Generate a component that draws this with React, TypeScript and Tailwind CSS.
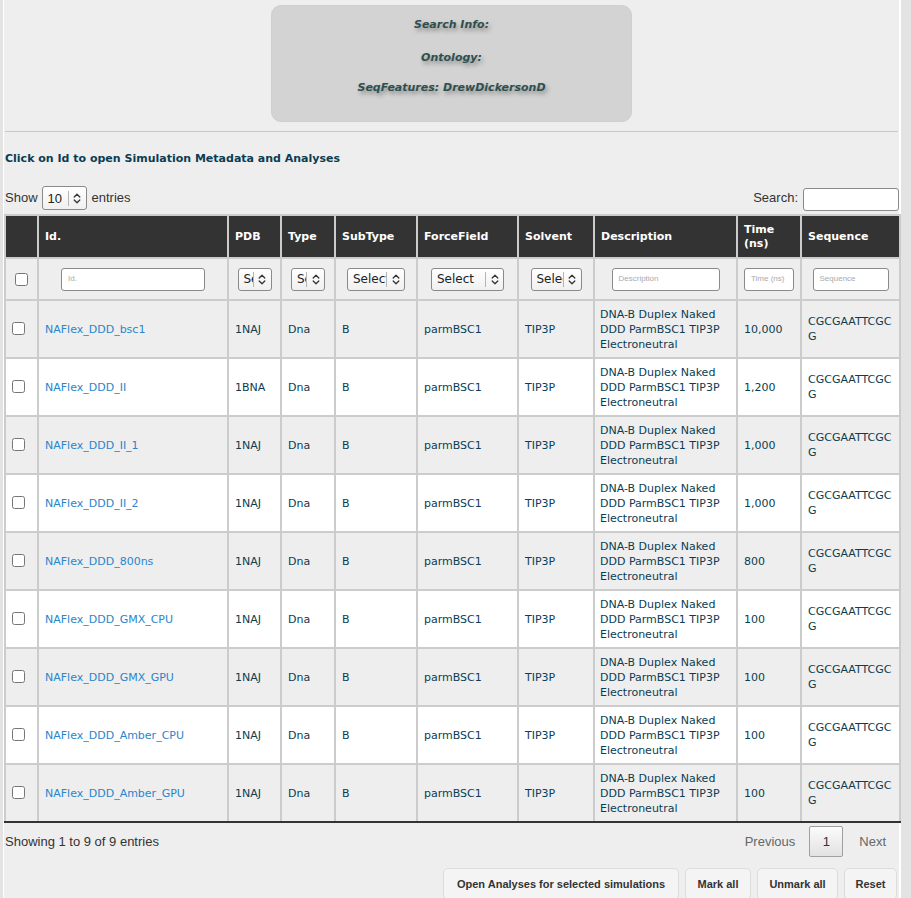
import React from "react";

const rows = [
  { id: "NAFlex_DDD_bsc1", pdb: "1NAJ", time: "10,000" },
  { id: "NAFlex_DDD_II", pdb: "1BNA", time: "1,200" },
  { id: "NAFlex_DDD_II_1", pdb: "1NAJ", time: "1,000" },
  { id: "NAFlex_DDD_II_2", pdb: "1NAJ", time: "1,000" },
  { id: "NAFlex_DDD_800ns", pdb: "1NAJ", time: "800" },
  { id: "NAFlex_DDD_GMX_CPU", pdb: "1NAJ", time: "100" },
  { id: "NAFlex_DDD_GMX_GPU", pdb: "1NAJ", time: "100" },
  { id: "NAFlex_DDD_Amber_CPU", pdb: "1NAJ", time: "100" },
  { id: "NAFlex_DDD_Amber_GPU", pdb: "1NAJ", time: "100" },
];

const Chevrons = () => (
  <svg width="8" height="11" viewBox="0 0 8 11" fill="none" stroke="#333" strokeWidth="1.3" strokeLinecap="round" strokeLinejoin="round">
    <path d="M1.2 4 L4 1.3 L6.8 4" />
    <path d="M1.2 7 L4 9.7 L6.8 7" />
  </svg>
);

const FakeSelect = ({ w, textW, label = "Select" }: { w: string; textW: string; label?: string }) => (
  <div className={`inline-flex items-center h-[23px] ${w} border border-[#8a8a8a] rounded-[3px] bg-gradient-to-b from-white to-[#f0f0f0] align-middle`}>
    <span className={`${textW} overflow-hidden whitespace-nowrap pl-[5px] text-left text-[12px] text-[#222] leading-none`} style={{ fontFamily: '"DejaVu Sans", sans-serif' }}>
      {label}
    </span>
    <span className="h-[15px] w-px bg-[#b5b5b5]" />
    <span className="flex-1 flex justify-center">
      <Chevrons />
    </span>
  </div>
);

const FakeInput = ({ w, ph }: { w: string; ph: string }) => (
  <div className={`inline-flex items-center h-[23px] ${w} border border-[#8a8a8a] rounded-[3px] bg-white pl-[6px] align-middle`}>
    <span className="text-[8px] text-[#aaa] leading-none" style={{ fontFamily: '"Liberation Sans", sans-serif' }}>
      {ph}
    </span>
  </div>
);

const cellBase = "border-2 border-[#cccccc] px-[6px] align-middle";

export default function App() {
  return (
    <div className="min-h-screen bg-[#e3e3e3] pl-[3px]" style={{ fontFamily: '"DejaVu Sans", sans-serif' }}>
      <div className="w-[898px] min-h-[898px] bg-[#eeeeee] border-l border-r-2 border-white">
        <div className="flex justify-center pt-[5px]">
          <div
            className="w-[361px] h-[117px] rounded-[10px] bg-[#d3d3d3] border border-[#cfcfcf] text-center text-[11px] font-bold italic text-[#2f4f4f] leading-[13px] pt-[12px]"
            style={{ textShadow: "2px 3px 4px rgba(0,0,0,0.35)" }}
          >
            <div>Search Info:</div>
            <div className="mt-[20px]">Ontology:</div>
            <div className="mt-[17px]">SeqFeatures: DrewDickersonD</div>
          </div>
        </div>
        <div className="mt-[9px] h-px bg-[#c8c8c8] mx-[1px]" />
        <div className="mt-[20px] pl-[1px] text-[11px] font-bold text-[#0b3d52] leading-[13px]">
          Click on Id to open Simulation Metadata and Analyses
        </div>
        <div className="mt-[21px] flex items-center justify-between h-[24px] pl-[1px] text-[13px] text-[#333]" style={{ fontFamily: '"Liberation Sans", sans-serif' }}>
          <div className="flex items-center">
            <span>Show</span>
            <div className="ml-[4px] inline-flex items-center h-[24px] w-[45px] border border-[#8a8a8a] rounded-[3px] bg-gradient-to-b from-white to-[#f0f0f0]">
              <span className="w-[25px] pl-[5px] text-[13px] text-[#222] leading-none">10</span>
              <span className="h-[15px] w-px bg-[#b5b5b5]" />
              <span className="flex-1 flex justify-center">
                <Chevrons />
              </span>
            </div>
            <span className="ml-[5px]">entries</span>
          </div>
          <div className="flex items-center">
            <span>Search:</span>
            <div className="ml-[5px] mt-[3px] h-[23px] w-[96px] border border-[#8a8a8a] rounded-[3px] bg-white" />
          </div>
        </div>
        <table className="mt-[4px] w-[895px] table-fixed border-collapse text-[11px] leading-[15px] text-[#0b3d52]">
          <colgroup>
            <col style={{ width: 33 }} />
            <col style={{ width: 190 }} />
            <col style={{ width: 53 }} />
            <col style={{ width: 54 }} />
            <col style={{ width: 82 }} />
            <col style={{ width: 101 }} />
            <col style={{ width: 76 }} />
            <col style={{ width: 143 }} />
            <col style={{ width: 64 }} />
            <col style={{ width: 99 }} />
          </colgroup>
          <thead>
            <tr className="h-[43px] bg-[#333333] text-white font-bold text-left">
              <th className={cellBase}></th>
              <th className={cellBase}>Id.</th>
              <th className={cellBase}>PDB</th>
              <th className={cellBase}>Type</th>
              <th className={cellBase}>SubType</th>
              <th className={cellBase}>ForceField</th>
              <th className={cellBase}>Solvent</th>
              <th className={cellBase}>Description</th>
              <th className={`${cellBase} leading-[14px]`}>
                Time
                <br />
                (ns)
              </th>
              <th className={cellBase}>Sequence</th>
            </tr>
          </thead>
          <tbody>
            <tr className="h-[42px] bg-[#eeeeee]">
              <td className={`${cellBase} text-center`}>
                <input type="checkbox" className="align-middle m-0" />
              </td>
              <td className={`${cellBase} text-center`}>
                <FakeInput w="w-[144px]" ph="Id." />
              </td>
              <td className={`${cellBase} text-center px-0`}>
                <FakeSelect w="w-[34px]" textW="w-[14px]" />
              </td>
              <td className={`${cellBase} text-center px-0`}>
                <FakeSelect w="w-[34px]" textW="w-[14px]" />
              </td>
              <td className={`${cellBase} text-center px-0`}>
                <FakeSelect w="w-[58px]" textW="w-[38px]" />
              </td>
              <td className={`${cellBase} text-center px-0`}>
                <FakeSelect w="w-[73px]" textW="w-[53px]" />
              </td>
              <td className={`${cellBase} text-center px-0`}>
                <FakeSelect w="w-[51px]" textW="w-[31px]" />
              </td>
              <td className={`${cellBase} text-center`}>
                <FakeInput w="w-[108px]" ph="Description" />
              </td>
              <td className={`${cellBase} text-center px-0`}>
                <FakeInput w="w-[50px]" ph="Time (ns)" />
              </td>
              <td className={`${cellBase} text-center`}>
                <FakeInput w="w-[76px]" ph="Sequence" />
              </td>
            </tr>
            {rows.map((r, i) => {
              const last = i === rows.length - 1 ? "border-b-[#333]" : "";
              return (
                <tr key={r.id} className={`h-[58px] ${i % 2 === 0 ? "bg-[#eeeeee]" : "bg-white"}`}>
                  <td className={`${cellBase} text-left ${last}`}>
                    <input type="checkbox" className="align-middle m-0 -mt-[3px]" />
                  </td>
                  <td className={`${cellBase} ${last}`}>
                    <span className="text-[#2a85cc]">{r.id}</span>
                  </td>
                  <td className={`${cellBase} ${last}`}>{r.pdb}</td>
                  <td className={`${cellBase} ${last}`}>Dna</td>
                  <td className={`${cellBase} ${last}`}>B</td>
                  <td className={`${cellBase} ${last}`}>parmBSC1</td>
                  <td className={`${cellBase} ${last}`}>TIP3P</td>
                  <td className={`${cellBase} pl-[5px] ${last}`}>DNA-B Duplex Naked DDD ParmBSC1 TIP3P Electroneutral</td>
                  <td className={`${cellBase} ${last}`}>{r.time}</td>
                  <td className={`${cellBase} break-all ${last}`}>CGCGAATTCGCG</td>
                </tr>
              );
            })}
          </tbody>
        </table>
        <div className="flex items-center justify-between pl-[1px] pr-[13px] mt-[3px] text-[13px]" style={{ fontFamily: '"Liberation Sans", sans-serif' }}>
          <span className="text-[#333]">Showing 1 to 9 of 9 entries</span>
          <div className="flex items-center text-[#666]">
            <span className="mr-[14px]">Previous</span>
            <span className="w-[34px] h-[31px] flex items-center justify-center border border-[#a0a0a0] rounded-[2px] bg-gradient-to-b from-[#fbfbfb] to-[#e2e2e2] text-[#333]">1</span>
            <span className="ml-[16px]">Next</span>
          </div>
        </div>
        <div className="flex justify-end gap-[6px] pr-[2px] mt-[11px] text-[11px] font-bold text-[#333]" style={{ fontFamily: '"Liberation Sans", sans-serif' }}>
          <div className="h-[32px] w-[236px] flex items-center justify-center border border-[#dcdcdc] rounded-[5px] bg-[#f4f4f4]">Open Analyses for selected simulations</div>
          <div className="h-[32px] w-[66px] flex items-center justify-center border border-[#dcdcdc] rounded-[5px] bg-[#f4f4f4]">Mark all</div>
          <div className="h-[32px] w-[81px] flex items-center justify-center border border-[#dcdcdc] rounded-[5px] bg-[#f4f4f4]">Unmark all</div>
          <div className="h-[32px] w-[53px] flex items-center justify-center border border-[#dcdcdc] rounded-[5px] bg-[#f4f4f4]">Reset</div>
        </div>
      </div>
    </div>
  );
}
